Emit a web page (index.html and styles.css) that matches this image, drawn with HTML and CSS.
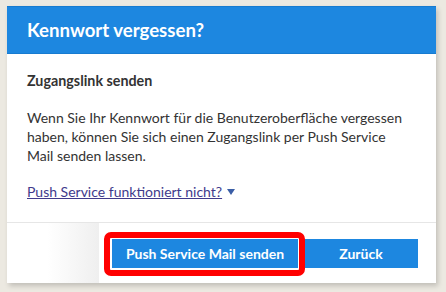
FILE: index.html
```html
<!DOCTYPE html>
<html lang="de">
<head>
<meta charset="utf-8">
<title>Kennwort vergessen?</title>
<link rel="stylesheet" href="styles.css">
</head>
<body>
<div class="dialog">
  <div class="dialog-header">Kennwort vergessen?</div>
  <div class="dialog-body">
    <h2 class="subtitle">Zugangslink senden</h2>
    <p class="text">Wenn Sie Ihr Kennwort für die Benutzeroberfläche vergessen haben, können Sie sich einen Zugangslink per Push Service Mail senden lassen.</p>
    <p class="help"><a href="#" class="help-link">Push Service funktioniert nicht?</a><span class="caret"></span></p>
  </div>
  <div class="dialog-footer">
    <button class="btn btn-primary">Push Service Mail senden</button>
    <button class="btn">Zurück</button>
  </div>
</div>
</body>
</html>
```
FILE: styles.css
```css
html, body {
  margin: 0;
  padding: 0;
}
body {
  background: #ece9e1;
  font-family: Lato, "Open Sans", sans-serif;
  color: #333333;
  width: 446px;
  height: 292px;
  overflow: hidden;
}
.dialog {
  margin: 6px 0 0 7px;
  width: 429px;
  background: #ffffff;
  box-shadow: 2px 3px 5px rgba(0, 0, 0, 0.18);
}
.dialog-header {
  height: 46px;
  background: #1d87e0;
  border-top: 1px solid #177bd0;
  border-bottom: 1px solid #177bd0;
  color: #ffffff;
  font-size: 18.6px;
  font-weight: 700;
  line-height: 46px;
  padding-left: 20px;
}
.dialog-body {
  padding: 17px 20px 0 20px;
  height: 151px;
}
.subtitle {
  margin: 0;
  font-size: 14.3px;
  font-weight: 700;
  line-height: 19px;
}
.text {
  margin: 18px 0 0 0;
  max-width: 382px;
  font-size: 14px;
  line-height: 19px;
}
.help {
  margin: 17px 0 0 0;
  font-size: 14px;
  line-height: 19px;
}
.help-link {
  color: #413a8c;
  text-decoration: underline;
}
.caret {
  display: inline-block;
  width: 0;
  height: 0;
  margin-left: 5px;
  border-left: 4px solid transparent;
  border-right: 4px solid transparent;
  border-top: 6px solid #3a5ea6;
  vertical-align: 2px;
}
.dialog-footer {
  border-top: 1px solid #e6e6e6;
  height: 61px;
  box-sizing: border-box;
  padding: 16px 18px 0 0;
  display: flex;
  justify-content: flex-end;
  gap: 6px;
  background: linear-gradient(to right, #ffffff 0px, #ffffff 40px, #efefef 92px, #ffffff 92px);
}
.btn {
  height: 29px;
  width: 114px;
  border: 0;
  border-radius: 0;
  background: #1d87e0;
  color: #ffffff;
  font-family: inherit;
  font-size: 14px;
  font-weight: 700;
  padding: 0;
}
.btn-primary {
  width: 186px;
  position: relative;
}
.btn-primary::after {
  content: "";
  position: absolute;
  left: -8px;
  top: -7px;
  right: -7px;
  bottom: -8px;
  border: 6px solid #ff0000;
  border-radius: 7px;
}
```
